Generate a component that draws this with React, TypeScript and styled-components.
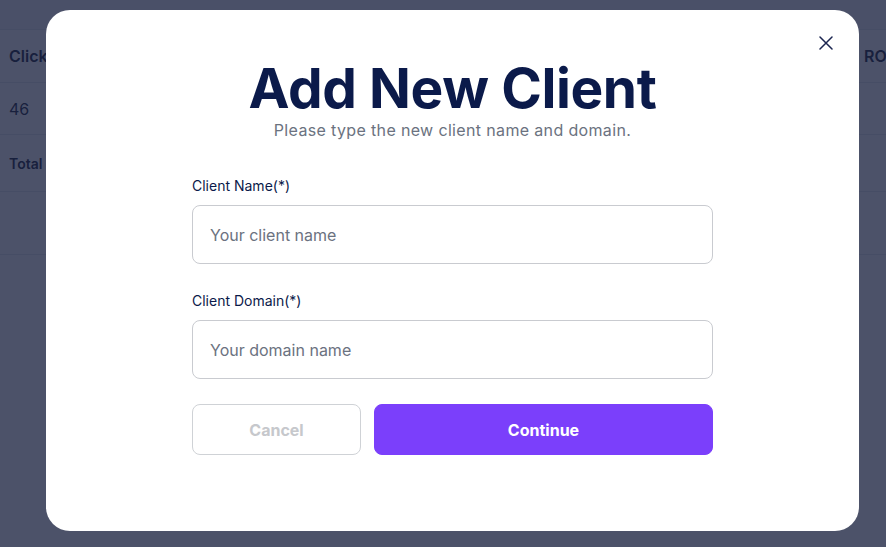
import styled, { createGlobalStyle } from 'styled-components';

const GlobalStyle = createGlobalStyle`
    * { box-sizing: border-box; }
    html, body {
        margin: 0;
        padding: 0;
        width: 886px;
        height: 547px;
        overflow: hidden;
        background: #ffffff;
        font-family: Inter, "Noto Sans", sans-serif;
    }
`

const columns = ['Clicks', 'Impressions', 'CTR', 'Conversions', 'Cost', 'Revenue', 'ROAS'];

const App = () => {
    return (
        <>
            <GlobalStyle />
            <Page>
                <TopBar />
                <Table>
                    <Row $height={53}>
                        {columns.map(c => (
                            <Cell key={c} $bold>{c}</Cell>
                        ))}
                    </Row>
                    <Row $height={52}>
                        <Cell>46</Cell>
                        <Cell>1,204</Cell>
                        <Cell>3.8%</Cell>
                        <Cell>5</Cell>
                        <Cell>$120</Cell>
                        <Cell>$640</Cell>
                    </Row>
                    <Row $height={57}>
                        <Cell $bold $small>Total</Cell>
                    </Row>
                    <Row $height={63} />
                </Table>
            </Page>
            <Overlay>
                <Modal>
                    <CloseButton aria-label="Close">
                        <svg width="14" height="14" viewBox="0 0 14 14" fill="none">
                            <path d="M1 1L13 13M13 1L1 13" stroke="#1b2550" strokeWidth="1.5" strokeLinecap="round" />
                        </svg>
                    </CloseButton>
                    <Title>Add New Client</Title>
                    <Subtitle>Please type the new client name and domain.</Subtitle>
                    <Form>
                        <Field>
                            <Label>Client Name(*)</Label>
                            <Input placeholder="Your client name" />
                        </Field>
                        <Field>
                            <Label>Client Domain(*)</Label>
                            <Input placeholder="Your domain name" />
                        </Field>
                        <Actions>
                            <Button type="button">Cancel</Button>
                            <Button type="button" $primary>Continue</Button>
                        </Actions>
                    </Form>
                </Modal>
            </Overlay>
        </>
    );
};

export default App;

const Page = styled.div`
    display: flex;
    flex-direction: column;
    width: 886px;
    height: 547px;
    background: #ffffff;
`
const TopBar = styled.div`
    height: 30px;
    background: #f6f7f9;
    border-bottom: 1px solid #e5e7eb;
`
const Table = styled.div`
    display: flex;
    flex-direction: column;
`
const Row = styled.div<{ $height: number }>`
    display: grid;
    grid-template-columns: 140px 140px 140px 140px 140px 155px 1fr;
    align-items: center;
    height: ${p => p.$height}px;
    padding: 0 0 0 9px;
    border-bottom: 1px solid #e5e7eb;
`
const Cell = styled.div<{ $bold?: boolean; $small?: boolean }>`
    font-size: ${p => (p.$small ? 14 : 16)}px;
    font-weight: ${p => (p.$bold ? 600 : 400)};
    color: #1f2a44;
    white-space: nowrap;
`
const Overlay = styled.div`
    position: fixed;
    inset: 0;
    display: flex;
    align-items: flex-start;
    padding: 10px 0 0 46px;
    background: rgba(22, 30, 60, 0.77);
`
const Modal = styled.div`
    position: relative;
    display: flex;
    flex-direction: column;
    align-items: center;
    width: 813px;
    height: 521px;
    padding-top: 48px;
    background: #ffffff;
    border-radius: 24px;
`
const CloseButton = styled.button`
    position: absolute;
    top: 25px;
    right: 25px;
    display: flex;
    align-items: center;
    justify-content: center;
    width: 16px;
    height: 16px;
    padding: 0;
    border: none;
    background: none;
`
const Title = styled.h1`
    margin: 0;
    font-size: 55px;
    line-height: 60px;
    font-weight: 700;
    letter-spacing: -0.4px;
    color: #0b1a4a;
`
const Subtitle = styled.p`
    margin: 1px 0 0;
    font-size: 16px;
    line-height: 22px;
    letter-spacing: 0.35px;
    color: #6b7280;
`
const Form = styled.div`
    display: flex;
    flex-direction: column;
    width: 521px;
    margin-top: 36px;
`
const Field = styled.div`
    display: flex;
    flex-direction: column;
    gap: 10px;
    margin-bottom: 28px;
    &:nth-child(2) {
        margin-bottom: 25px;
    }
`
const Label = styled.label`
    font-size: 14px;
    line-height: 18px;
    font-weight: 400;
    color: #0b1a4a;
`
const Input = styled.input`
    height: 59px;
    padding: 0 17px;
    border: 1px solid #c9cbd0;
    border-radius: 8px;
    font-family: inherit;
    font-size: 16px;
    color: #111827;
    outline: none;
    &::placeholder {
        color: #6b7280;
    }
`
const Actions = styled.div`
    display: grid;
    grid-template-columns: 169px 1fr;
    gap: 13px;
`
const Button = styled.button<{ $primary?: boolean }>`
    height: 51px;
    border-radius: 8px;
    font-family: inherit;
    font-size: 16px;
    font-weight: 700;
    cursor: pointer;
    border: 1px solid ${p => (p.$primary ? '#7b3ffb' : '#cfd2d6')};
    background: ${p => (p.$primary ? '#7b3ffb' : '#ffffff')};
    color: ${p => (p.$primary ? '#ffffff' : '#c6c8cc')};
`
